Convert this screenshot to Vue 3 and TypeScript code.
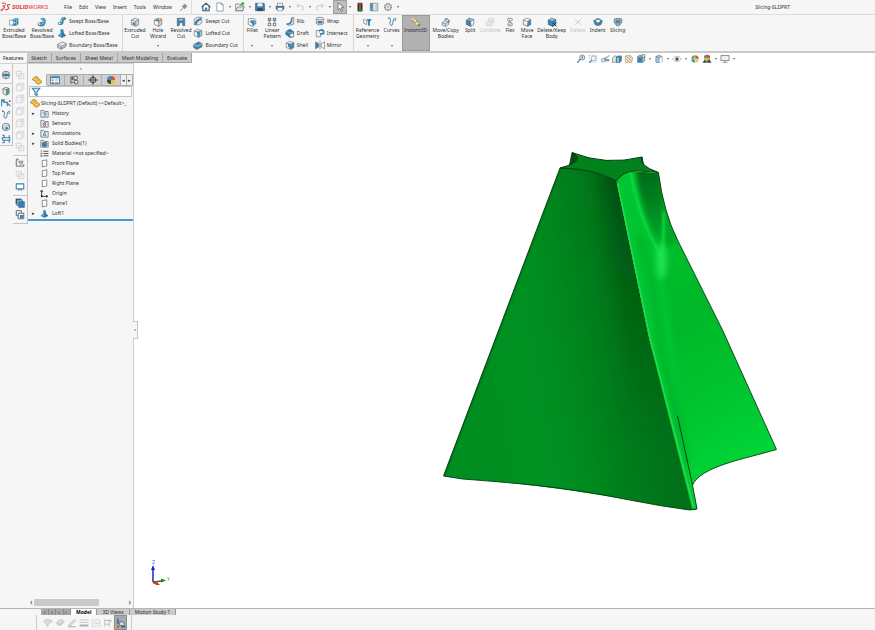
<script setup lang="ts">
import { h, ref, type FunctionalComponent } from 'vue'

const B = '#3a83b0'
const L = '#9acae5'
const K = '#5b666f'
const G = '#cdd0d2'

const cube = (top: string, left: string, right: string, line = K) =>
  `<path d="M2 5l5-3 7 2-5 3z" fill="${top}"/><path d="M2 5l7 2v8l-7-3z" fill="${left}"/><path d="M9 7l5-3v8l-5 3z" fill="${right}"/><path d="M2 5l5-3 7 2v8l-5 3-7-3zM2 5l7 2 5-3M9 7v8" fill="none" stroke="${line}"/>`
const folder = (inner: string) =>
  `<path d="M1.500 14.500v-12h5l1 2h7v10z" fill="#f3f4f5" stroke="#6f777d" stroke-width="1.500"/><path d="M3 6h10" stroke="#aab0b5"/>${inner}`

const art: Record<string, string> = {
  extrude: `<path d="M1 5h6v8H1z" fill="#fff" stroke="${K}"/><path d="M6 4l3-2h6v9l-3 3H6z" fill="${B}"/><path d="M6 4h6v10M12 4l3-2" fill="none" stroke="${L}"/><path d="M3 9h6M7 7l3 2-3 2" fill="none" stroke="#fff"/>`,
  revolve: `<path d="M5 3c4-4 10-1 9 4 0 5-3 8-7 8-3 0-6-1-6-4l5-3c4 1 5-3-1-5z" fill="${B}"/><path d="M7 3c5-1 6 5 2 7M3 11c3 2 6 1 8-2" fill="none" stroke="${L}" stroke-width="1.500"/><circle cx="4" cy="11" r="2" fill="#fff" stroke="${K}"/>`,
  sweep: `<path d="M4 12c8 1 0-8 8-8" fill="none" stroke="${B}" stroke-width="5" stroke-linecap="round"/><path d="M4 11c6 1 0-7 7-8" fill="none" stroke="${L}" stroke-width="1.500"/><circle cx="4" cy="12" r="2" fill="#fff" stroke="${K}"/>`,
  loft: `<path d="M6 2h4l1 6 3 4-6 3-6-3 3-4z" fill="${B}"/><path d="M6 2l-1 6-3 4 5 2z" fill="${L}"/><path d="M2 12l6-2 6 2-6 3z" fill="none" stroke="#1b5c86"/>`,
  boundary: `<path d="M1 7l8-4 6 3-1 5-8 4-5-3z" fill="#eceef0" stroke="${K}"/><path d="M1 7l6 3 8-4M1 10l6 3 8-5M7 10v5" fill="none" stroke="${K}"/>`,
  cut: cube('#e6e9eb', '#f7f7f7', '#cfd4d8') + `<path d="M4 8l4 1v4l-4-1z" fill="${B}"/>`,
  wizard: cube('#e6e9eb', '#f7f7f7', '#cfd4d8') + `<ellipse cx="7" cy="5" rx="3" ry="1.500" fill="${B}"/><path d="M8 13l5-10M11 2l3 3M14 2l-3 3" stroke="#e0a030" stroke-width="1.500"/>`,
  revcut: `<path d="M2 2h12v12h-3l-1-5H6l-1 5H2z" fill="${B}" stroke="${K}"/><path d="M4 3c2 4 6 4 8 0" fill="${L}"/>`,
  sweepcut: `<path d="M2 5l5-3h7v9l-4 3H2z" fill="#e4e8ea" stroke="${K}"/><path d="M4 14c1-6 3-8 9-9" fill="none" stroke="${B}" stroke-width="4"/>`,
  loftcut: cube('#e9edf0', '#f6f6f6', L) + `<path d="M6 5h5v9H7z" fill="${B}" opacity=".85"/>`,
  boundcut: `<path d="M1 7l8-4 6 3-1 5-8 4-5-3z" fill="${B}" stroke="${K}"/><path d="M1 7l6 3 8-4" fill="none" stroke="#fff"/>`,
  fillet: `<path d="M2 3l9-1 3 3v6l-5 4-7-3z" fill="#f1f3f4" stroke="${K}"/><path d="M7 5c4-1 6 1 7 5l-5 5c0-4-1-6-5-7z" fill="${B}"/><path d="M8 6c3 0 4 2 4 5" fill="none" stroke="${L}"/>`,
  pattern: `<g fill="${L}" stroke="${K}" stroke-width="1.400"><path d="M2 2h4v4H2zM10 2h4v4h-4z"/></g><g fill="#fff" stroke="${K}" stroke-width="1.400"><path d="M2 10h4v4H2zM10 10h4v4h-4z"/></g><path d="M4 6v3M12 6v3" stroke="${B}"/>`,
  rib: `<path d="M2 13l8-2V3l4-1v11l-8 2z" fill="#dfe4e8" stroke="${K}"/><path d="M3 12c4 0 7-3 7-9l2 1c0 6-3 10-8 10z" fill="${B}"/>`,
  draft: `<path d="M2 5l6-3 6 4-1 8-5 1-7-5z" fill="${B}" stroke="#1b5c86"/><path d="M2 5l6 3 6-2" fill="none" stroke="${L}"/><path d="M8 9h6v5H8z" fill="#fff" stroke="${K}"/>`,
  shell: cube('#fff', '#f2f3f4', B) + `<path d="M5 5h4l3 4-2 4-5-2z" fill="${B}"/><path d="M8 6l3 4" stroke="${L}"/>`,
  wrap: `<path d="M2 4v8c2 3 10 3 12 0V4" fill="#dfe3e6" stroke="${K}"/><ellipse cx="8" cy="4" rx="6" ry="2" fill="#eef0f2" stroke="${K}"/><path d="M4 8h8v4H4z" fill="${B}"/>`,
  intersect: `<path d="M2 4h7v10H2z" fill="#f2f3f4" stroke="${K}"/><path d="M6 3l5-2 4 3v6l-6 1z" fill="${B}"/><path d="M8 5h4v3H8z" fill="#fff"/>`,
  mirror: `<path d="M1 3l5 3v5l-5 3z" fill="${B}" stroke="${K}"/><path d="M15 3l-5 3v5l5 3z" fill="#fff" stroke="${K}"/><path d="M8 1v14" stroke="${K}"/>`,
  refgeo: `<path d="M1 4l5 2v6l-5-2z" fill="#fff" stroke="${K}"/><path d="M6 3h8l-3 5v6H8V8z" fill="${B}"/><path d="M11 3l3 2" stroke="${L}"/>`,
  curves: `<path d="M2 2c4-1 4 2 3 6s1 6 3 5 1-8 3-10 4-1 3 1" fill="none" stroke="${B}" stroke-width="1.500"/><circle cx="3" cy="2" r="1.200" fill="${K}"/><circle cx="13" cy="5" r="1.200" fill="${K}"/>`,
  instant: `<path d="M3 3l6 2 5 7-2 2-5-5-5-2z" fill="#f2c14a" stroke="#9d7a25"/><path d="M1 2l7 4M8 11h5" stroke="#fff" stroke-width="1.500"/><path d="M10 14l4-4 1 4z" fill="${B}"/>`,
  move: `<path d="M2 9l5-3 5 2v4l-5 3-5-2z" fill="#e4e8ea" stroke="${K}"/><path d="M5 5c3-5 7-3 8 1l2-1-2 4-3-3h2c-1-2-3-3-5-1z" fill="${B}"/><path d="M2 9l5 2 5-3M7 11v4" fill="none" stroke="${K}"/>`,
  split: cube(L, B, '#f3f4f5') + `<path d="M6 1l4 14" stroke="${K}"/>`,
  combine: `<path d="M6 2h8v7h-3v5H2V7h4z" fill="#e4e5e6" stroke="${G}"/><path d="M6 7h5v2" fill="none" stroke="${G}"/>`,
  flex: `<path d="M5 2h6l1 3-4 2 4 4-1 3H5l-1-3 3-2-3-4z" fill="#f3f4f5" stroke="${K}"/><path d="M6 4c4 1-1 3 3 5 2 2-1 4-3 3" fill="none" stroke="${K}"/>`,
  face: cube('#fff', '#eceff1', '#c8d9e4') + `<path d="M9 7l5-3v8l-5 3z" fill="${B}"/><path d="M4 9h6" stroke="#fff"/>`,
  keep: cube(L, B, B, '#1b5c86') + `<path d="M9 9l6 6M15 9l-6 6" stroke="#2c3940" stroke-width="1.500"/>`,
  del: `<path d="M3 3l10 10M13 3L3 13" stroke="${G}" stroke-width="1.500"/>`,
  indent: `<path d="M1 6l7-4 7 4-2 6-5 2-5-2z" fill="${B}" stroke="${K}"/><path d="M4 6l4-2 4 2-4 3z" fill="#fff"/>`,
  slicing: `<path d="M2 3l6-1 6 1v6l-4 5H6L2 9z" fill="${L}" stroke="${K}"/><path d="M2 6h12M3 9h10M6 2v11M10 2v11" stroke="${K}"/><path d="M6 6h4v3H6z" fill="${B}"/>`,
  home: `<path d="M1 8l7-6 7 6M3 7v7h10V7" fill="#fff" stroke="#3c5c73" stroke-width="1.800"/><path d="M6 9h4v5H6z" fill="${B}"/>`,
  page: `<path d="M3 1.500h7l3 3v10H3z" fill="#fff" stroke="#66707a"/><path d="M10 1.500v3h3" fill="none" stroke="#66707a"/>`,
  open: `<path d="M1 3h5l1 2h6v9H1z" fill="#eff1f2" stroke="#58636c"/><path d="M4 8h11l-3 6H1z" fill="#dce3e6" stroke="#58636c"/><path d="M9 6c0-3 2-4 4-4M11 1l3 1-2 3" fill="none" stroke="#37a637" stroke-width="1.700"/>`,
  save: `<path d="M1 2h13l1 1v11H1z" fill="${B}" stroke="#2c4b60"/><path d="M4 2h8v5H4z" fill="#e9eef1"/><path d="M4 10h8v4H4z" fill="#36424b"/>`,
  print: `<path d="M4 6V2h8v4" fill="#fff" stroke="${K}"/><path d="M1 6h14v6H1z" fill="#68737c"/><path d="M4 9h8v5H4z" fill="#fff" stroke="${B}"/>`,
  undo: `<path d="M3 6h7c5 0 4 7 0 7M6 3L3 6l3 3" fill="none" stroke="${G}" stroke-width="1.700"/>`,
  redo: `<path d="M13 6H6c-5 0-4 7 0 7M10 3l3 3-3 3" fill="none" stroke="${G}" stroke-width="1.700"/>`,
  cursor: `<path d="M5 1v12l3-3 2 5 2-1-2-5h4z" fill="#fff" stroke="#4c4c4c"/>`,
  traffic: `<rect x="4" y="1" width="8" height="14" rx="2" fill="#33322c"/><circle cx="8" cy="4" r="2" fill="#e33c28"/><circle cx="8" cy="8" r="1.600" fill="#8f7c24"/><circle cx="8" cy="12" r="2" fill="#39a83c"/>`,
  list: `<path d="M2 2h12v12H2z" fill="#fff" stroke="${K}"/><path d="M2 2h5v12H2z" fill="${B}" opacity=".8"/><path d="M9 5h4M9 8h4M9 11h4M3 5h3M3 8h3" stroke="${K}"/>`,
  gear: `<circle cx="8" cy="8" r="5.500" fill="none" stroke="#7c858c" stroke-width="2" stroke-dasharray="2.500 1.200"/><circle cx="8" cy="8" r="4.200" fill="#fff" stroke="#7c858c"/><circle cx="8" cy="8" r="1.700" fill="none" stroke="#7c858c"/>`,
  pin: `<path d="M9 3l4 4-2 1-2 3-4-4 3-2z" fill="#8b969e" stroke="#76818a"/><path d="M2 14l4-4" stroke="#76818a" stroke-width="1.500"/>`,
  zoomfit: `<circle cx="10" cy="5.500" r="4" fill="#e4f0f7" stroke="#6e8595" stroke-width="1.500"/><path d="M7 8l-5 6" stroke="#6e8595" stroke-width="2"/><path d="M8 5h4M10 3v5" stroke="${B}"/>`,
  zoomarea: `<path d="M2 2h12v11H2z" fill="none" stroke="#93a0aa" stroke-dasharray="2 2"/><circle cx="9" cy="7" r="4" fill="#eef5f9" stroke="#6e8595"/><path d="M6 10l-4 5" stroke="#6e8595" stroke-width="2"/>`,
  prev: `<path d="M15 2L8 9M10 4l-4 4M8 9h6v2H8" fill="none" stroke="#60788a" stroke-width="1.500"/><circle cx="5" cy="10" r="3" fill="#dbeaf3" stroke="#60788a"/>`,
  section: `<path d="M1 6l3-3h3v9l-3 2H1z" fill="#dfe7ec" stroke="${K}"/><path d="M7 5l3-2h5v8l-3 3H7z" fill="${B}" stroke="${K}"/><path d="M8 6h3v7H8z" fill="${L}"/>`,
  dynamic: `<path d="M2 3l8-1 4 4-2 8H3z" fill="#f3e7cf" stroke="#8f948f"/><path d="M4 4l8 7M4 9l5 4M8 3l4 4" stroke="#d18c2e" stroke-width="1.500"/>`,
  orient: `<path d="M2 5h8v9H2z" fill="${B}"/><path d="M2 5l3-3h9v9l-4 3V5z" fill="${L}" stroke="${K}"/><path d="M10 1h4v4h-4z" fill="#fff" stroke="${K}"/>`,
  style: `<path d="M3 4l5-2 5 2v9l-5 2-5-2z" fill="${L}" stroke="#607889"/><path d="M8 6l5-2v9l-5 2z" fill="#f4f6f7"/><path d="M3 4l5 2 5-2M8 6v9" fill="none" stroke="#607889"/>`,
  eye: `<path d="M1 8c4-6 10-6 14 0-4 5-10 5-14 0z" fill="#fff" stroke="#8b9399"/><circle cx="8" cy="8" r="2.800" fill="#4c555c"/>`,
  ball: `<circle cx="8" cy="8" r="6.500" fill="#f2c32f"/><path d="M8 8V1.500A6.500 6.500 0 0 0 1.500 8z" fill="#3a8fd0"/><path d="M8 8H1.500A6.500 6.500 0 0 0 8 14.500z" fill="#444"/><path d="M8 8V1.500A6.500 6.500 0 0 1 14.500 8z" fill="#dd4f3f"/><path d="M8 8h6.500A6.500 6.500 0 0 1 8 14.500z" fill="#e9c83c"/>`,
  look: `<path d="M8 8V2A6 6 0 0 0 2 8z" fill="#62ad4c"/><path d="M8 8V2a6 6 0 0 1 6 6z" fill="#dd4f3f"/><path d="M2 8h6v6a6 6 0 0 1-6-6z" fill="#3f8fcb"/><path d="M8 8h6a6 6 0 0 1-6 6z" fill="#eccb45"/><path d="M8 2v12M2 8h12" stroke="#fff" stroke-width=".8"/>`,
  scene: `<circle cx="8" cy="6" r="5" fill="#e6b33a"/><path d="M8 6V1a5 5 0 0 0-5 5z" fill="#3a8fd0"/><path d="M8 6h5a5 5 0 0 0-5-5z" fill="#d64434"/><path d="M1 14l3-5 4 3 4-4 3 6z" fill="#3d4850"/><path d="M4 14l3-2 3 2z" fill="#5fb14b"/>`,
  monitor: `<path d="M1.500 2.500h13v8h-13z" fill="#eef3f6" stroke="#7e8890" stroke-width="1.500"/><path d="M8 11v3M4 14h8" stroke="#7e8890" stroke-width="1.500"/>`,
  part: `<path d="M1 6l5-4 4 2 1 3 4 2v3l-5 3-4-3-1-3-4-1z" fill="#e9b02e" stroke="#9b6f10"/><path d="M2 6l4 2 4-3M7 9l3 2 4-2M10 11v3" fill="none" stroke="#fbe7a8"/>`,
  props: `<path d="M1 2h14v12H1z" fill="#fff" stroke="#42708f" stroke-width="1.500"/><path d="M2 3h12v2H2zM3 7h3v2H3zM3 11h3v2H3z" fill="${B}"/><path d="M8 8h5M8 12h5" stroke="${K}"/>`,
  config: `<path d="M3 2v12M3 12h4M8 2h5v5H8zM9 9h5v5H9z" fill="#fff" stroke="${K}" stroke-width="1.500"/><path d="M4 2h3v6H4z" fill="${K}"/><path d="M7 8l4 6" stroke="${K}"/>`,
  target: `<circle cx="8" cy="8" r="4.500" fill="none" stroke="#303a41" stroke-width="1.500"/><path d="M8 0v16M0 8h16" stroke="#303a41" stroke-width="1.300"/>`,
  funnel: `<path d="M2 2h12L9.500 8v6l-3-2V8z" fill="#d9ecf6" stroke="#3c80a8" stroke-width="1.800"/>`,
  history: folder(`<path d="M5 9a3 3 0 1 1 1 3M8 8v2h2" fill="none" stroke="${B}" stroke-width="1.500"/>`),
  sensors: folder(`<circle cx="8" cy="10" r="2.500" fill="#fff" stroke="#444" stroke-width="1.500"/><path d="M8 10l2-4" stroke="#d34b3c" stroke-width="1.500"/>`),
  notes: folder(`<path d="M5 13l3-7 3 7M6 11h4" fill="none" stroke="${B}" stroke-width="1.500"/>`),
  bodies: folder(`<path d="M4 7l4-1 4 1v5l-4 2-4-2z" fill="${B}" stroke="#1c4b6b"/>`),
  material: `<path d="M6 4h9M6 8h9M6 12h9" stroke="#303a41" stroke-width="1.500"/><path d="M1 2h3v3H1z" fill="#dd9c32"/><path d="M1 6.500h3v3H1z" fill="${B}"/><path d="M1 11h3v3H1z" fill="#66717a"/>`,
  plane: `<path d="M4 3l8-1.500v11L4 14z" fill="#fff" stroke="#60676d" stroke-width="1.300"/>`,
  origin: `<path d="M3 2v11h11M1 5l2-3 2 3M11 11l3 2-3 2" fill="none" stroke="#252d33" stroke-width="1.600"/><circle cx="3" cy="13" r="1.500"/>`,
  box: `<path d="M2 5l3-3h9v9l-3 3H2z" fill="#f3f3f3" stroke="${G}" stroke-width="1.300"/><path d="M2 5h9v9M11 5l3-3" fill="none" stroke="${G}" stroke-width="1.300"/>`,
  box2: `<path d="M2 2h8v8H2zM6 6h8v8H6z" fill="#f5f5f5" stroke="${G}" stroke-width="1.300"/>`,
  globe: `<circle cx="8" cy="8" r="6" fill="#e9eff3" stroke="${K}" stroke-width="1.300"/><path d="M3 6h10v4H3z" fill="${B}"/><path d="M8 2v12" stroke="${K}"/>`,
  tube: `<path d="M3 4l5-2 5 2v8l-5 3-5-3z" fill="#dce3e8" stroke="${K}"/><path d="M8 6l5-2v8l-5 3z" fill="#5a9c63"/><path d="M3 4l5 2 5-2" fill="none" stroke="${K}"/>`,
  spline: `<path d="M1 13V3h4v4h5v6M10 8l5 5M1 3l4 4" fill="none" stroke="${B}" stroke-width="1.700"/><circle cx="14" cy="5" r="1.500" fill="${K}"/>`,
  ring: `<circle cx="8" cy="8" r="6" fill="#cbd2d7" stroke="${K}" stroke-width="1.300"/><circle cx="9" cy="10" r="3" fill="${B}" stroke="#fff"/><path d="M3 5l7-2" stroke="#fff"/>`,
  ladder: `<path d="M2 2h3v4h8V2M2 14h3v-4h8v4M2 6h12v4H3z" fill="none" stroke="${B}" stroke-width="1.700"/>`,
  sketch: `<path d="M2 2h4M2 2v11h12v-3" fill="none" stroke="${K}" stroke-width="1.500"/><path d="M6 5h7l-2 5z" fill="${L}" stroke="${B}"/><path d="M4 4l6 8" stroke="#d68a2e" stroke-width="1.500"/>`,
  screen: `<path d="M2 3h12v8H2z" fill="#fff" stroke="${B}" stroke-width="1.700"/><path d="M5 14l3-3 3 3" fill="none" stroke="${K}" stroke-width="1.500"/>`,
  stack: `<path d="M1 1h9v9H1z" fill="#3c4a54"/><path d="M3 3h9v9H3z" fill="#8ac3e3" stroke="#1b5c86"/><path d="M6 6h9v9H6z" fill="${B}" stroke="#1b5c86"/>`,
  stack2: `<path d="M2 1h8v8H2z" fill="#fff" stroke="${K}" stroke-width="1.500"/><path d="M5 5h9v9H5z" fill="#e5edf2" stroke="${K}" stroke-width="1.500"/><path d="M8 8h5v5H8z" fill="${B}"/>`,
  brush: `<path d="M1 5c5-4 9-3 14 0l-6 4-2 5-2-5z" fill="#dadcde" stroke="#b5b9bc"/>`,
  eraser: `<path d="M2 8l5-5c3-1 6 0 8 3l-6 6c-3 0-6-1-7-4z" fill="#dadcde" stroke="#b5b9bc"/><path d="M4 8l5 2 4-4" fill="none" stroke="#b5b9bc"/>`,
  pencil: `<path d="M2 12L12 2l2 2-9 9z" fill="#dfe1e3" stroke="#a6abaf"/><path d="M2 14h12" stroke="#a6abaf" stroke-width="1.500"/>`,
  lines: `<path d="M1 3h14M1 7h14" stroke="#a6abaf"/><path d="M1 12h14" stroke="#a6abaf" stroke-width="3"/>`,
  dash: `<path d="M2 3h12v10H2z" fill="none" stroke="#b6babd" stroke-dasharray="3 1"/><path d="M4 10l3-4 3 4 3-3" fill="none" stroke="#b6babd"/>`,
  level: `<path d="M3 2v12M10 2v12M3 4h10M3 10h7M12 3l2 2-2 2" fill="none" stroke="#b0b4b7" stroke-width="1.300"/>`,
  axis: `<path d="M3 1v13h12" fill="none" stroke="#2a62c8" stroke-width="2.500"/><path d="M3 10v4h5" fill="none" stroke="#f0cc3a" stroke-width="2.500"/><path d="M3 12v2h2" fill="none" stroke="#d8352a" stroke-width="2.500"/><path d="M6 6h3l4 2v4H6z" fill="#dfe8f0" stroke="#3a4650"/>`,
}

const Icon: FunctionalComponent<{ name: string }> = (props) =>
  h('svg', { viewBox: '0 0 16 16', 'aria-hidden': 'true', innerHTML: art[props.name] })
Icon.props = ['name']

interface Tool { icon: string; lines: string[]; size: string; arrow?: boolean; state?: string }
interface Mini { icon: string; label: string }
interface Group { tools: Tool[]; stacks: Mini[][] }

const groups: Group[] = [
  {
    tools: [
      { icon: 'extrude', lines: ['Extruded', 'Boss/Base'], size: 'lg' },
      { icon: 'revolve', lines: ['Revolved', 'Boss/Base'], size: 'lg' },
    ],
    stacks: [[
      { icon: 'sweep', label: 'Swept Boss/Base' },
      { icon: 'loft', label: 'Lofted Boss/Base' },
      { icon: 'boundary', label: 'Boundary Boss/Base' },
    ]],
  },
  {
    tools: [
      { icon: 'cut', lines: ['Extruded', 'Cut'], size: 'md' },
      { icon: 'wizard', lines: ['Hole', 'Wizard'], size: 'md', arrow: true },
      { icon: 'revcut', lines: ['Revolved', 'Cut'], size: 'md' },
    ],
    stacks: [[
      { icon: 'sweepcut', label: 'Swept Cut' },
      { icon: 'loftcut', label: 'Lofted Cut' },
      { icon: 'boundcut', label: 'Boundary Cut' },
    ]],
  },
  {
    tools: [
      { icon: 'fillet', lines: ['Fillet'], size: 'xs', arrow: true },
      { icon: 'pattern', lines: ['Linear', 'Pattern'], size: 'md', arrow: true },
    ],
    stacks: [
      [
        { icon: 'rib', label: 'Rib' },
        { icon: 'draft', label: 'Draft' },
        { icon: 'shell', label: 'Shell' },
      ],
      [
        { icon: 'wrap', label: 'Wrap' },
        { icon: 'intersect', label: 'Intersect' },
        { icon: 'mirror', label: 'Mirror' },
      ],
    ],
  },
  {
    tools: [
      { icon: 'refgeo', lines: ['Reference', 'Geometry'], size: 'lg', arrow: true },
      { icon: 'curves', lines: ['Curves'], size: 'sm', arrow: true },
      { icon: 'instant', lines: ['Instant3D'], size: 'lg', state: 'pressed' },
      { icon: 'move', lines: ['Move/Copy', 'Bodies'], size: 'xl' },
      { icon: 'split', lines: ['Split'], size: 'xs' },
      { icon: 'combine', lines: ['Combine'], size: 'md', state: 'off' },
      { icon: 'flex', lines: ['Flex'], size: 'xs' },
      { icon: 'face', lines: ['Move', 'Face'], size: 'xs' },
      { icon: 'keep', lines: ['Delete/Keep', 'Body'], size: 'xl' },
      { icon: 'del', lines: ['Delete'], size: 'sm', state: 'off' },
      { icon: 'indent', lines: ['Indent'], size: 'sm' },
      { icon: 'slicing', lines: ['Slicing'], size: 'sm' },
    ],
    stacks: [],
  },
]

const menus = ['File', 'Edit', 'View', 'Insert', 'Tools', 'Window']
const quick = [
  { icon: 'home', arrow: false }, { icon: 'page', arrow: true }, { icon: 'open', arrow: true },
  { icon: 'save', arrow: true }, { icon: 'print', arrow: true }, { icon: 'undo', arrow: true },
  { icon: 'redo', arrow: true }, { icon: 'cursor', arrow: true }, { icon: 'traffic', arrow: false },
  { icon: 'list', arrow: false }, { icon: 'gear', arrow: true },
]
const tabs = ['Features', 'Sketch', 'Surfaces', 'Sheet Metal', 'Mesh Modeling', 'Evaluate']
const activeTab = ref('Features')
const viewTools = [
  { icon: 'zoomfit', arrow: false }, { icon: 'zoomarea', arrow: false }, { icon: 'prev', arrow: false },
  { icon: 'section', arrow: false }, { icon: 'dynamic', arrow: false }, { icon: 'orient', arrow: true },
  { icon: 'style', arrow: true }, { icon: 'eye', arrow: true }, { icon: 'look', arrow: false },
  { icon: 'scene', arrow: true }, { icon: 'monitor', arrow: true },
]
const railOne = [['globe'], ['tube', 'spline', 'curves', 'ring', 'ladder']]
const railTwo = [
  ['box2', 'box', 'box', 'box', 'box', 'box', 'box2'],
  ['sketch', 'box2', 'screen'],
  ['stack', 'stack2'],
]
const panelTabs = ['part', 'props', 'config', 'target', 'ball']
const tree = [
  { icon: 'history', label: 'History', open: true },
  { icon: 'sensors', label: 'Sensors', open: false },
  { icon: 'notes', label: 'Annotations', open: true },
  { icon: 'bodies', label: 'Solid Bodies(1)', open: true },
  { icon: 'material', label: 'Material <not specified>', open: false },
  { icon: 'plane', label: 'Front Plane', open: false },
  { icon: 'plane', label: 'Top Plane', open: false },
  { icon: 'plane', label: 'Right Plane', open: false },
  { icon: 'origin', label: 'Origin', open: false },
  { icon: 'plane', label: 'Plane1', open: false },
  { icon: 'loft', label: 'Loft1', open: true },
]
const filter = ref('')
const sheets = ['Model', '3D Views', 'Motion Study 1']
const activeSheet = ref('Model')
const lineTools = ['brush', 'eraser', 'pencil', 'lines', 'dash', 'level', 'axis']
</script>

<template>
  <div class="app">
    <header class="titlebar">
      <div class="brand">
        <svg class="mark" viewBox="0 0 30 27" aria-hidden="true">
          <path d="M5 3h8c5 0 3 6-2 7l-4 1M9 10c5 2 1 9-8 12M13 13c-3 7-6 10-10 12" fill="none" stroke="#d8382c" stroke-width="2.500" />
          <path d="M28 8c-6-3-10 1-6 5s0 9-8 8" fill="none" stroke="#d8382c" stroke-width="3" />
        </svg>
        <span class="word"><b>SOLID</b>WORKS</span>
      </div>
      <nav class="menus">
        <button v-for="m in menus" :key="m">{{ m }}</button>
        <Icon name="pin" class="icon" />
      </nav>
      <div class="quick">
        <template v-for="q in quick" :key="q.icon">
          <button :class="['cell', { pressed: q.icon === 'cursor' }]" :aria-label="q.icon"><Icon :name="q.icon" class="icon" /></button>
          <span v-if="q.arrow" class="arrow"></span>
        </template>
      </div>
      <h1 class="doc">Slicing-SLDPRT</h1>
    </header>

    <div class="ribbon">
      <section v-for="(g, gi) in groups" :key="gi" class="group">
        <button v-for="t in g.tools" :key="t.icon" :class="['tool', t.size, t.state]" :disabled="t.state === 'off'">
          <Icon :name="t.icon" class="icon" />
          <span v-for="l in t.lines" :key="l" class="line">{{ l }}</span>
          <span v-if="t.arrow" class="arrow"></span>
        </button>
        <div v-for="(s, si) in g.stacks" :key="si" class="stack">
          <button v-for="m in s" :key="m.label" class="mini"><Icon :name="m.icon" class="icon" />{{ m.label }}</button>
        </div>
      </section>
    </div>

    <div class="strip">
      <div class="tabs">
        <button v-for="t in tabs" :key="t" :class="{ active: t === activeTab }" @click="activeTab = t">{{ t }}</button>
      </div>
      <div class="view-tools">
        <template v-for="v in viewTools" :key="v.icon">
          <button class="view-cell" :aria-label="v.icon"><Icon :name="v.icon" class="icon" /></button>
          <span v-if="v.arrow" class="arrow"></span>
        </template>
      </div>
    </div>

    <main class="work">
      <div class="rails">
        <div class="rail first">
          <div v-for="(set, i) in railOne" :key="i" class="set">
            <button v-for="(n, j) in set" :key="j" :aria-label="n"><Icon :name="n" class="icon" /></button>
          </div>
        </div>
        <div class="rail second">
          <div v-for="(set, i) in railTwo" :key="i" class="set">
            <button v-for="(n, j) in set" :key="j" :aria-label="n"><Icon :name="n" class="icon" /></button>
          </div>
        </div>
      </div>

      <aside class="panel">
        <div class="grip"><i></i></div>
        <div class="panel-tabs">
          <button v-for="p in panelTabs" :key="p" :class="{ active: p === 'part' }" :aria-label="p"><Icon :name="p" class="icon" /></button>
          <button class="step" aria-label="back">◂</button>
          <button class="step" aria-label="forward">▸</button>
        </div>
        <label class="filter"><Icon name="funnel" class="icon" /><input v-model="filter" type="text" aria-label="Filter" /></label>
        <div class="root"><Icon name="part" class="icon" />Slicing-SLDPRT (Default) &lt;&lt;Default&gt;_</div>
        <ul class="tree">
          <li v-for="n in tree" :key="n.label">
            <span class="twist">{{ n.open ? '▸' : '' }}</span><Icon :name="n.icon" class="icon" />{{ n.label }}
          </li>
        </ul>
        <div class="scroll"><span>‹</span><div class="track"><i></i></div><span>›</span></div>
        <button class="handle" aria-label="collapse"><i></i></button>
      </aside>

      <section class="viewport">
        <svg class="model" viewBox="135 63 740 545" aria-hidden="true">
          <defs>
            <linearGradient id="left" gradientUnits="userSpaceOnUse" x1="470" y1="345" x2="652" y2="312">
              <stop offset="0" stop-color="#008e20" />
              <stop offset=".3" stop-color="#009022" />
              <stop offset=".5" stop-color="#008a1e" />
              <stop offset=".75" stop-color="#007a1b" />
              <stop offset="1" stop-color="#007019" />
            </linearGradient>
            <linearGradient id="shade" gradientUnits="userSpaceOnUse" x1="0" y1="180" x2="0" y2="440">
              <stop offset="0" stop-color="#00480e" stop-opacity=".8" />
              <stop offset=".5" stop-color="#00480e" stop-opacity=".35" />
              <stop offset="1" stop-color="#00480e" stop-opacity="0" />
            </linearGradient>
            <linearGradient id="right" gradientUnits="userSpaceOnUse" x1="650" y1="250" x2="760" y2="450">
              <stop offset="0" stop-color="#00bd2b" />
              <stop offset=".35" stop-color="#00b829" />
              <stop offset=".7" stop-color="#00c42e" />
              <stop offset="1" stop-color="#00d437" />
            </linearGradient>
            <linearGradient id="hollow" gradientUnits="userSpaceOnUse" x1="0" y1="172" x2="0" y2="244">
              <stop offset="0" stop-color="#006d19" />
              <stop offset=".3" stop-color="#007a1c" />
              <stop offset=".7" stop-color="#009724" />
              <stop offset="1" stop-color="#00b12b" />
            </linearGradient>
            <filter id="soft" x="-50%" y="-20%" width="200%" height="140%"><feGaussianBlur stdDeviation="3" /></filter>
            <filter id="fine" x="-50%" y="-20%" width="200%" height="140%"><feGaussianBlur stdDeviation="1" /></filter>
            <filter id="mid" x="-50%" y="-20%" width="200%" height="140%"><feGaussianBlur stdDeviation="2" /></filter>
            <filter id="wide" x="-80%" y="-20%" width="260%" height="140%"><feGaussianBlur stdDeviation="9" /></filter>
            <clipPath id="clipLeft"><path d="M560.500 168Q593 168 617 181L650 340L697 510H690Q660 506 630 500Q540 484 463 479L444 476Z" /></clipPath>
            <clipPath id="clipRight"><path d="M617 181C626 168 638 172 659 173Q664 212 678 240L723 330L777 449.500C745 459 702 466 693 485L697.500 509L693 510L650 340Z" /></clipPath>
          </defs>
          <g clip-path="url(#clipLeft)">
            <rect x="440" y="160" width="260" height="355" fill="url(#left)" />
            <path d="M598 150L630 150L690 500L640 500Z" fill="url(#shade)" filter="url(#wide)" />
            <path d="M560 166L443 477" fill="none" stroke="#006013" stroke-width="3" filter="url(#fine)" />
          </g>
          <g clip-path="url(#clipRight)">
            <rect x="610" y="160" width="170" height="355" fill="url(#right)" />
            <path d="M617 170L634 165Q643 220 658 252Q672 300 690 490L650 340Z" fill="#00c430" filter="url(#mid)" />
            <path d="M640 235Q656 285 662 350L686 465" fill="none" stroke="#00ad27" stroke-width="8" opacity=".6" filter="url(#soft)" />
            <path d="M659 173L666 250L678 240Z" fill="#00a827" filter="url(#mid)" />
            <path d="M635 162H660Q666 220 662 246Q643 222 635 162Z" fill="url(#hollow)" filter="url(#mid)" />
            <path d="M631 172Q639 214 653 240L662 258Q665 235 664 212" fill="none" stroke="#0cdc46" stroke-width="3" opacity=".8" filter="url(#fine)" />
            <ellipse cx="662" cy="261" rx="5" ry="18" fill="#22e558" filter="url(#soft)" />
          </g>
          <path d="M619 184L652 340L695 509" fill="none" stroke="#00c834" stroke-width="5" filter="url(#fine)" clip-path="url(#clipRight)" />
          <path d="M618 183L651 340L694 507" fill="none" stroke="#2ddc5a" stroke-width="1.200" />
          <path d="M572.500 152.500L570 165L578 160Q579 156 572.500 152.500Z" fill="#004f12" stroke="#092b0e" stroke-width=".8" />
          <path d="M642.500 157L645 169L641 165Z" fill="#006017" stroke="#092b0e" stroke-width=".8" />
          <path d="M560.500 168Q576 164 578 159Q578 155 572.500 152.500Q606 166 642.500 157Q638 165 659 172.500C638 171 626 168 617 181Q598 169 560.500 168Z" fill="#00821c" stroke="#083810" stroke-width="1" stroke-linejoin="round" />
          <path d="M560.500 168L444 476L463 479C530 484 570 488 630 500Q660 506 690 510L697.500 509L693 485C702 466 745 459 777 449.500L723 330L678 240Q664 212 659 173M693 485L678 416" fill="none" stroke="#073b0e" stroke-width=".9" stroke-linejoin="round" />
        </svg>
        <svg class="triad" viewBox="0 0 24 28" aria-hidden="true">
          <path d="M6 22V9" stroke="#1b25c9" stroke-width="1.500" /><path d="M6 5l-2 5h4z" fill="#1b25c9" />
          <path d="M6 22l9-1" stroke="#1c7d2b" stroke-width="1.500" /><path d="M19 20.500l-5-2v4z" fill="#1c7d2b" />
          <path d="M6 22l4 2" stroke="#d92c1d" stroke-width="2" /><path d="M13 25l-3-3-1 3z" fill="#d92c1d" />
          <text x="5" y="4" font-size="5" fill="#4a55d6">Z</text>
          <text x="20" y="21" font-size="5" fill="#2f9a3e">Y</text>
        </svg>
      </section>
    </main>

    <footer class="footer">
      <div class="sheets">
        <div class="nav"><button aria-label="first">◂</button><button aria-label="previous">◂</button><button aria-label="next">▸</button><button aria-label="last">▸</button></div>
        <button v-for="s in sheets" :key="s" :class="['sheet', { active: s === activeSheet }]" @click="activeSheet = s">{{ s }}</button>
      </div>
      <div class="line-tools">
        <button v-for="n in lineTools" :key="n" :class="{ pressed: n === 'axis' }" :aria-label="n"><Icon :name="n" class="icon" /></button>
      </div>
    </footer>
  </div>
</template>

<style>
body { background: #fff; }
</style>

<style scoped>
.app { display: flex; flex-direction: column; height: 100vh; overflow: hidden; background: #f6f6f6; color: #2c3034; font: 5px/6px "Noto Sans", "Open Sans", sans-serif; }
button { display: flex; align-items: center; justify-content: center; margin: 0; padding: 0; border: 0; background: none; color: inherit; font: inherit; white-space: nowrap; }
.icon { flex: none; width: 10px; height: 10px; }
.arrow { display: flex; flex: none; align-items: center; justify-content: center; width: 6px; }
.arrow::after { content: ""; border: 1px solid transparent; border-top: 2px solid #666; border-bottom: 0; }

.titlebar { display: flex; flex: none; align-items: stretch; height: 14px; border-bottom: 1px solid #dcdcdc; }
.brand { display: flex; align-items: center; gap: 1px; width: 60px; color: #d8382c; }
.mark { width: 11px; height: 10px; }
.word { font: italic 6px/8px Roboto, "Liberation Sans", sans-serif; }
.menus { display: flex; align-items: center; gap: 7px; width: 132px; padding-left: 4px; box-sizing: border-box; border-right: 1px solid #dcdcdc; }
.quick { display: flex; padding-left: 7px; }
.cell { width: 14px; }
.cell.pressed { background: #bdbdbd; outline: 1px solid #9e9e9e; outline-offset: -1px; }
.doc { flex: 1; margin: 0; padding-right: 85px; align-self: center; text-align: right; font: inherit; }

.ribbon { display: flex; flex: none; height: 36px; border-bottom: 2px solid #c9c9c9; }
.group { display: flex; border-right: 1px solid #d4d4d4; }
.group:last-child { border-right: 0; }
.tool { position: relative; flex-direction: column; justify-content: flex-start; padding-top: 2px; }
.tool .arrow { position: absolute; bottom: 4px; }
.xs { width: 17px; }
.sm { width: 20px; }
.md { width: 23px; }
.lg { width: 28px; }
.xl { width: 32px; }
.tool.pressed { background: #b1b1b1; outline: 1px solid #999; outline-offset: -1px; }
.off { color: #bfc1c3; }
.stack { display: grid; grid-template-rows: repeat(3, 12px); padding: 0 5px 0 1px; }
.mini { justify-content: flex-start; gap: 2px; }

.strip { display: flex; flex: none; justify-content: space-between; height: 10px; background: #fff; }
.tabs { display: flex; }
.tabs button { padding: 0 4px; border: 1px solid #a5a5a5; border-width: 0 1px 1px 0; background: #cbcbcb; }
.tabs .active { padding: 0 3px; border-color: #f6f6f6; background: #f6f6f6; color: #111; }
.view-tools { display: flex; margin-right: 138px; padding-top: 2px; }
.view-cell { width: 12px; }

.work { display: flex; flex: 1; min-height: 0; }
.rails { display: flex; width: 28px; align-items: flex-start; border-top: 1px solid #d2d2d2; box-sizing: border-box; }
.rail { padding: 5px 0 0; border: 1px solid #c4c4c4; border-width: 0 1px 1px 0; }
.rail button { width: 100%; height: 12px; }
.first { width: 12px; }
.second { flex: 1; padding-bottom: 2px; }
.set + .set { margin-top: 2px; padding-top: 1px; border-top: 1px solid #c8c8c8; }

.panel { position: relative; display: flex; flex: none; flex-direction: column; width: 106px; border: 1px solid #cecece; border-width: 1px 1px 0 0; box-sizing: border-box; }
.grip { display: flex; align-items: center; justify-content: center; height: 10px; }
.grip i, .handle i { width: 2px; height: 2px; border-radius: 50%; background: #aaa; }
.panel-tabs { display: flex; height: 12px; }
.panel-tabs button { flex: 1; border: 1px solid #adadad; border-width: 1px 1px 1px 0; background: #cfcfcf; }
.panel-tabs .active { border-color: transparent #adadad transparent transparent; background: #f6f6f6; }
.panel-tabs .step { flex: none; width: 6px; background: #f0f0f0; }
.filter { display: flex; align-items: center; height: 11px; margin: 0 1px; padding-left: 1px; border: 1px solid #c5c5c5; background: #fff; box-sizing: border-box; }
.filter input { flex: 1; min-width: 0; padding: 0; border: 0; outline: 0; background: none; font: inherit; }
.root { display: flex; align-items: center; gap: 1px; height: 10px; padding: 1px 0 0 2px; white-space: nowrap; overflow: hidden; }
.tree { margin: 0; padding: 0 0 1px; list-style: none; border-bottom: 2px solid #4c9bd0; }
.tree li { display: flex; align-items: center; height: 10px; gap: 2px; white-space: nowrap; }
.tree .twist { width: 10px; text-align: center; }
.tree .icon { width: 9px; height: 9px; margin-right: 1px; }
.scroll { display: flex; align-items: center; gap: 2px; height: 12px; margin-top: auto; padding: 0 2px; font-size: 8px; }
.track { flex: 1; }
.track i { display: block; width: 70%; height: 7px; background: #cacaca; }
.handle { position: absolute; top: 257px; left: 100%; z-index: 1; width: 5px; height: 18px; border: 1px solid #c4c4c4; border-left: 0; background: #f6f6f6; }

.viewport { position: relative; flex: 1; min-width: 0; background: #fff; }
.model { display: block; width: 100%; height: 100%; }
.triad { position: absolute; bottom: 20px; left: 13px; width: 24px; height: 28px; }

.footer { flex: none; border-top: 1px solid #b5b5b5; }
.sheets { display: flex; height: 6px; padding-left: 41px; }
.nav { display: flex; width: 30px; background: #a9a9a9; color: #777; }
.nav button { flex: 1; border-right: 1px solid #8c8c8c; }
.sheet { padding: 0 5px; border-right: 1px solid #999; background: #cbcbcb; }
.sheet.active { background: #fff; color: #000; font-weight: 700; }
.line-tools { display: flex; width: 96px; height: 15px; margin-left: 36px; padding-left: 5px; border: 1px solid #c9c9c9; border-width: 0 1px; box-sizing: border-box; }
.line-tools button { width: 12px; }
.line-tools .pressed { width: 13px; background: #a9a9a9; outline: 1px solid #8e8e8e; outline-offset: -1px; }
</style>
